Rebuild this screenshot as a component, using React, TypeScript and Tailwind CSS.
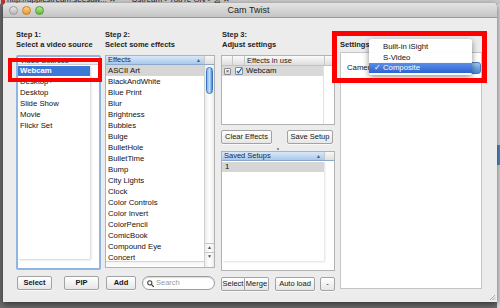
import { JSX } from 'react'
import clsx from 'clsx'

const effects = [
  'ASCII Art',
  'BlackAndWhite',
  'Blue Print',
  'Blur',
  'Brightness',
  'Bubbles',
  'Bulge',
  'BulletHole',
  'BulletTime',
  'Bump',
  'City Lights',
  'Clock',
  'Color Controls',
  'Color Invert',
  'ColorPencil',
  'ComicBook',
  'Compound Eye',
  'Concert',
]

const sources = ['Desktop+', 'Desktop', 'Slide Show', 'Movie', 'Flickr Set']

function MacButton({ children, className }: { children: React.ReactNode; className?: string }): JSX.Element {
  return (
    <div
      className={clsx(
        'flex h-[14px] items-center justify-center rounded-[2px] border border-[#a3a3a3] bg-linear-to-b from-white to-[#e6e6e6] text-[7.5px] leading-none text-[#161616] shadow-[0_1px_0_rgba(255,255,255,0.7)]',
        className
      )}
    >
      {children}
    </div>
  )
}

function StepHeading({ step, text }: { step: string; text: string }): JSX.Element {
  return (
    <div className="h-[20px] text-[7.5px] font-bold leading-[10px] text-[#222]">
      <div>{step}</div>
      <div className="whitespace-nowrap">{text}</div>
    </div>
  )
}

function BlueHeader({ label }: { label: string }): JSX.Element {
  return (
    <div className="flex h-[9px] border-b border-[#8aa9cf]">
      <div className="flex flex-1 items-center justify-between bg-linear-to-b from-[#d9e8f8] to-[#a9c8ec] pl-[2px] pr-[3px] text-[7.5px] leading-none text-[#1e2a3a]">
        <span>{label}</span>
        <span className="text-[5px] text-[#4a5a70]">▲</span>
      </div>
      <div className="w-[10px] border-l border-[#c9c9c9] bg-linear-to-b from-[#f7f7f7] to-[#e0e0e0]" />
    </div>
  )
}

export default function App(): JSX.Element {
  return (
    <div className="relative h-[308px] w-[500px] overflow-hidden bg-[#6c6c6c] font-['Liberation_Sans',Arial,sans-serif]">
      {/* desktop behind */}
      <div className="absolute left-0 top-0 flex h-[4px] w-[500px] items-start overflow-hidden bg-[#c9c9c9] text-[8px] leading-none text-[#222]">
        <span className="ml-[1px] mt-[-4px] h-[8px] w-[4px] bg-[#c8322a]" />
        <span className="ml-[2px] mt-[-4px] whitespace-nowrap">http://applestream.seesaw...  ✕</span>
        <span className="ml-[16px] mt-[-4px] whitespace-nowrap">Ustream - You're ON - 당  ✕</span>
      </div>
      <div className="absolute right-0 top-[4px] h-[304px] w-[3px] bg-[#dadada]">
        <div className="mt-[141px] h-[20px] w-[3px] bg-[#4f8cc4]" />
      </div>

      {/* window */}
      <div className="absolute left-[3px] top-[3px] flex h-[299px] w-[494px] flex-col overflow-hidden rounded-t-[4px] bg-[#ececec] shadow-[0_2px_6px_rgba(0,0,0,0.55)]">
        <div className="relative flex h-[15px] items-center border-b border-[#9a9a9a] bg-linear-to-b from-[#e4e4e4] to-[#c4c4c4] pl-[6px]">
          <div className="flex gap-[4px]">
            <span className="h-[9px] w-[9px] rounded-full border border-[#9d9d9d] bg-linear-to-b from-[#e8e8e8] to-[#b9b9b9]" />
            <span className="h-[9px] w-[9px] rounded-full border border-[#c9801d] bg-linear-to-b from-[#fbd28a] to-[#f0961f]" />
            <span className="h-[9px] w-[9px] rounded-full border border-[#4f9a2e] bg-linear-to-b from-[#b8ea8e] to-[#5cbb34]" />
          </div>
          <div className="flex-1 pr-[44px] text-center text-[9px] leading-none text-[#222]">Cam Twist</div>
        </div>

        <div className="relative flex flex-1 px-[13px]">
          {/* column 1 */}
          <div className="flex w-[85px] flex-col pt-[12px]">
            <StepHeading step="Step 1:" text="Select a video source" />
            <div className="mt-[5px] flex h-[215px] flex-col overflow-hidden rounded-[2px] border-2 border-[#8fb5e3] bg-white">
              <div className="h-[8px] border-b border-[#cfcfcf] bg-linear-to-b from-white to-[#ebebeb] pl-[2px] text-[7.5px] leading-[8px] text-[#333]">
                Video Sources
              </div>
              <div className="flex flex-1">
                <div className="flex flex-1 flex-col">
                  <div className="flex-1 shadow-[1px_1px_2px_rgba(0,0,0,0.18)]">
                    <div className="mt-[1px] flex h-[10px] items-center bg-[#3d78d8] pl-[2px] text-[7.75px] font-bold text-white">
                      Webcam
                    </div>
                    {sources.map((s) => (
                      <div key={s} className="flex h-[11px] items-center pl-[2px] text-[7.75px] text-[#111]">
                        {s}
                      </div>
                    ))}
                  </div>
                  <div className="h-[9px]" />
                </div>
                <div className="w-[9px]" />
              </div>
            </div>
            <div className="mt-[6px] flex">
              <MacButton className="ml-[1px] w-[35px] font-bold">Select</MacButton>
              <MacButton className="ml-[12px] w-[35px] font-bold">PIP</MacButton>
            </div>
          </div>

          {/* column 2 */}
          <div className="ml-[4px] flex w-[110px] flex-col pt-[12px]">
            <StepHeading step="Step 2:" text="Select some effects" />
            <div className="mt-[5px] flex h-[213px] flex-col overflow-hidden border border-[#b2b2b2] bg-white">
              <BlueHeader label="Effects" />
              <div className="flex flex-1 overflow-hidden">
                <div className="flex flex-1 flex-col overflow-hidden">
                  <div className="flex-1 overflow-hidden">
                    {effects.map((e, i) => (
                      <div
                        key={e}
                        className={clsx(
                          'flex h-[11px] items-center pl-[2px] text-[7.75px] leading-none text-[#111]',
                          i === 0 && 'bg-[#d6d6d6]'
                        )}
                      >
                        {e}
                      </div>
                    ))}
                  </div>
                  <div className="h-[6px] border-t border-[#d4d4d4] bg-linear-to-b from-[#f4f4f4] to-white" />
                </div>
                <div className="flex w-[10px] flex-col border-l border-[#d0d0d0] bg-linear-to-r from-[#ececec] via-white to-[#ececec]">
                  <div className="mx-auto mt-[2px] h-[27px] w-[7px] rounded-full border border-[#3a75c0] bg-linear-to-r from-[#7fb3ea] via-[#c5e0fb] to-[#3f88db]" />
                  <div className="flex-1" />
                  <div className="flex h-[9px] items-center justify-center border-t border-[#c4c4c4] text-[5px] text-[#555]">▲</div>
                  <div className="flex h-[9px] items-center justify-center border-t border-[#c4c4c4] text-[5px] text-[#555]">▼</div>
                  <div className="h-[6px]" />
                </div>
              </div>
            </div>
            <div className="mt-[8px] flex items-center">
              <MacButton className="ml-[1px] w-[30px] font-bold">Add</MacButton>
              <div className="ml-[6px] flex h-[14px] w-[73px] items-center rounded-full border border-[#9c9c9c] bg-white pl-[4px] shadow-[inset_0_1px_1px_rgba(0,0,0,0.15)]">
                <svg width="7" height="7" viewBox="0 0 10 10" className="shrink-0">
                  <circle cx="4" cy="4" r="3" fill="none" stroke="#444" strokeWidth="1.5" />
                  <path d="M6.2 6.2 L9.2 9.2" stroke="#444" strokeWidth="1.8" strokeLinecap="round" />
                </svg>
                <span className="ml-[2px] text-[7.5px] leading-none text-[#9a9a9a]">Search</span>
              </div>
            </div>
          </div>

          {/* column 3 */}
          <div className="ml-[6px] flex w-[114px] flex-col pt-[12px]">
            <div className="pl-[1px]">
              <StepHeading step="Step 3:" text="Adjust settings" />
            </div>
            <div className="mt-[5px] flex h-[70px] flex-col overflow-hidden border border-[#b2b2b2] bg-white">
              <div className="flex h-[10px] border-b border-[#c2c2c2] bg-linear-to-b from-[#fafafa] to-[#dedede] text-[7.5px] leading-none text-[#222]">
                <div className="w-[11px] border-r border-[#c6c6c6]" />
                <div className="w-[12px] border-r border-[#c6c6c6]" />
                <div className="flex w-[80px] items-center border-r border-[#c6c6c6] pl-[2px]">Effects in use</div>
                <div className="flex-1" />
              </div>
              <div className="flex flex-1">
                <div className="flex flex-1 flex-col">
                  <div className="flex-1">
                    <div className="flex h-[10px] items-center bg-[#d9d9d9] text-[7.75px] leading-none text-[#111]">
                      <div className="ml-[2px] flex h-[7px] w-[7px] items-center justify-center rounded-[1px] border border-[#8a8a8a] bg-linear-to-b from-white to-[#dcdcdc] text-[6px] leading-none text-[#333]">
                        ×
                      </div>
                      <div className="ml-[4px] flex h-[8px] w-[8px] items-center justify-center rounded-[1px] border border-[#7a8ea8] bg-linear-to-b from-white to-[#d6e4f4]">
                        <svg width="8" height="8" viewBox="0 0 10 10">
                          <path d="M1.5 5.2 L4 8 L9.5 0.5" fill="none" stroke="#1b4f9c" strokeWidth="1.8" />
                        </svg>
                      </div>
                      <span className="ml-[3px]">Webcam</span>
                    </div>
                  </div>
                  <div className="h-[5px]" />
                </div>
                <div className="w-[11px] border-l border-[#e2e2e2]" />
              </div>
            </div>
            <div className="mt-[5px] flex justify-between pr-[2px]">
              <MacButton className="w-[51px]">Clear Effects</MacButton>
              <MacButton className="w-[46px]">Save Setup</MacButton>
            </div>
            <div className="flex h-[7px] items-center justify-center">
              <span className="ml-[-1px] mt-[2px] h-[2px] w-[2px] bg-[#8c8c8c]" />
            </div>
            <div className="flex h-[120px] flex-col overflow-hidden border border-[#b2b2b2] bg-white">
              <BlueHeader label="Saved Setups" />
              <div className="flex flex-1">
                <div className="flex flex-1 flex-col">
                  <div className="flex-1 shadow-[1px_1px_2px_rgba(0,0,0,0.12)]">
                    <div className="mt-[1px] flex h-[10px] items-center bg-[#d6d6d6] pl-[3px] text-[7.75px] leading-none text-[#111]">
                      1
                    </div>
                  </div>
                  <div className="h-[9px]" />
                </div>
                <div className="w-[10px]" />
              </div>
            </div>
            <div className="mt-[6px] flex">
              <MacButton className="w-[24px] rounded-r-none">Select</MacButton>
              <MacButton className="w-[24px] rounded-l-none border-l-0">Merge</MacButton>
              <MacButton className="ml-[6px] w-[40px]">Auto load</MacButton>
              <MacButton className="ml-[5px] w-[15px] text-[#777]">-</MacButton>
            </div>
          </div>

          {/* column 4 */}
          <div className="ml-[5px] flex w-[142px] flex-col pt-[22px]">
            <div className="h-[10px] text-[7.5px] font-bold leading-[10px] text-[#222]">Settings</div>
            <div className="mt-[2px] h-[237px] border border-[#c4c4c4] bg-white pl-[6px] pt-[9px]">
              <div className="flex items-center">
                <span className="text-[7.75px] leading-none text-[#111]">Camera</span>
                <div className="ml-[2px] h-[12px] w-[106px] rounded-[3px] border border-[#4b79b4] bg-linear-to-b from-[#a6c9f0] via-[#6ea4e2] to-[#4a8ad8]" />
              </div>
            </div>
          </div>

          {/* resize grip */}
          <svg className="absolute bottom-[1px] right-[1px]" width="8" height="8" viewBox="0 0 8 8">
            <path d="M7 2 L2 7 M7 4.5 L4.5 7 M7 6.5 L6.5 7" stroke="#9c9c9c" strokeWidth="0.8" />
          </svg>
        </div>
      </div>

      {/* open popup menu */}
      <div className="absolute left-[369px] top-[39px] flex h-[36px] w-[103px] flex-col rounded-[3px] bg-white/95 pt-[2px] shadow-[0_2px_6px_rgba(0,0,0,0.45)]">
        <div className="flex h-[11px] items-center pl-[14px] text-[7.75px] leading-none text-[#111]">Built-in iSight</div>
        <div className="flex h-[11px] items-center pl-[14px] text-[7.75px] leading-none text-[#111]">S-Video</div>
        <div className="flex h-[10px] items-center bg-linear-to-b from-[#5a8fe6] to-[#2d63d3] pl-[5px] text-[7.75px] leading-none text-white">
          <span className="w-[9px]">✓</span>
          <span>Composite</span>
        </div>
      </div>

      {/* red highlight boxes */}
      <div className="absolute left-[8px] top-[58px] h-[24px] w-[94px] border-4 border-[#f00]" />
      <div className="absolute left-[332px] top-[31px] h-[52px] w-[155px] border-[5px] border-[#f00]" />
    </div>
  )
}
